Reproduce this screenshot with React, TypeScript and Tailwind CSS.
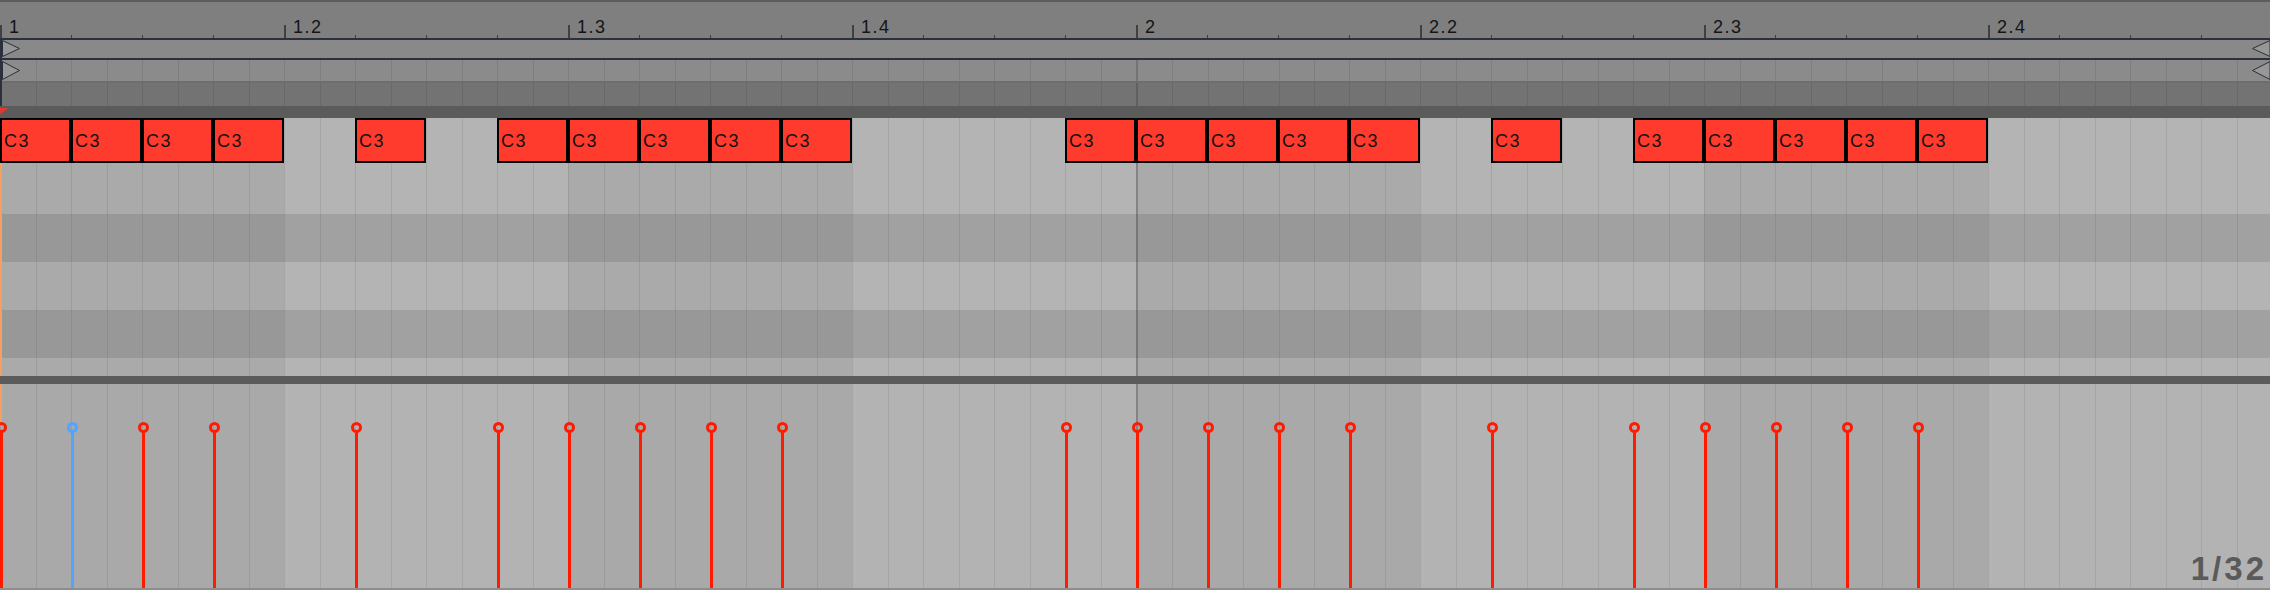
import React from 'react';

const beats = ['1', '1.2', '1.3', '1.4', '2', '2.2', '2.3', '2.4'];
const notes = [0, 1, 2, 3, 5, 7, 8, 9, 10, 11, 15, 16, 17, 18, 19, 21, 23, 24, 25, 26, 27];
const font = "font-['Liberation_Sans',Arial,sans-serif]";

interface ColumnsProps {
  even: string;
  odd: string;
  line: string;
  barLine: string;
}

// 32nd-note grid, 8 beats of 8 cells
const Columns: React.FC<ColumnsProps> = ({ even, odd, line, barLine }) => (
  <div className="flex h-full w-full">
    {beats.map((_, b) => (
      <div key={b} className={`flex flex-1 ${b % 2 === 0 ? even : odd}`}>
        {Array.from({ length: 8 }).map((_, c) => (
          <div key={c} className={`flex-1 ${b === 4 && c === 0 ? barLine : line}`} />
        ))}
      </div>
    ))}
  </div>
);

const TriRight = ({ h }: { h: number }) => (
  <svg width="19" height={h} viewBox={`0 0 19 ${h}`} className="block">
    <polygon points={`0.5,0.5 17.5,${h / 2} 0.5,${h - 0.5}`} fill="#979797" stroke="#2c2f3c" strokeWidth="1" />
  </svg>
);

const TriLeft = ({ h }: { h: number }) => (
  <svg width="19" height={h} viewBox={`0 0 19 ${h}`} className="block">
    <polygon points={`19,0.5 1.5,${h / 2} 19,${h - 0.5}`} fill="#979797" stroke="#2c2f3c" strokeWidth="1" />
  </svg>
);

const Ruler = () => (
  <div className="flex h-[36px] bg-[#7f7f7f]">
    {beats.map((label, b) => (
      <div key={b} className="flex flex-1">
        {[0, 1, 2, 3].map((s) => (
          <div key={s} className="flex flex-1 items-start">
            {s === 0 ? (
              <>
                <div className="mt-[23px] h-[13px] w-[2px] bg-[#404040]" />
                <span className={`ml-[7px] mt-[16.4px] text-[18px] leading-[18px] tracking-[1.5px] text-[#141414] ${font}`}>
                  {label}
                </span>
              </>
            ) : (
              <div className="mt-[33px] h-[3px] w-px bg-[#404040]" />
            )}
          </div>
        ))}
      </div>
    ))}
  </div>
);

export default function App() {
  return (
    <div className="h-[590px] w-[2270px] overflow-hidden bg-[#7f7f7f]">
      <div className="flex h-[590px] w-[2272px] flex-col">
        <div className="h-[2px] bg-[#5d5d5d]" />
        <Ruler />

        {/* loop brace + upper lanes */}
        <div className="relative flex flex-col">
          <div className="h-[2px] bg-[#2c2f3c]" />
          <div className="flex h-[18px] items-start justify-between bg-[#898989] pl-[2px] pr-[2px]">
            <TriRight h={17} />
            <TriLeft h={17} />
          </div>
          <div className="h-[2px] bg-[#2c2f3c]" />
          <div className="relative h-[21px]">
            <Columns even="bg-[#8b8b8b]" odd="bg-[#8b8b8b]" line="border-l border-[#7e7e7e]" barLine="border-l-2 border-[#747474]" />
            <div className="absolute inset-x-[2px] top-[1px] flex justify-between">
              <TriRight h={19} />
              <TriLeft h={19} />
            </div>
          </div>
          <div className="h-[2px] bg-[#6d6d6d]" />
          <div className="h-[23px]">
            <Columns even="bg-[#737373]" odd="bg-[#737373]" line="border-l border-[#686868]" barLine="border-l-2 border-[#606060]" />
          </div>
          <div className="absolute bottom-0 left-0 top-0 w-[2px] bg-[#2c2f3c]" />
        </div>

        <div className="h-[12px] bg-[#5b5b5b] pt-[1.5px]">
          <svg width="9" height="7" viewBox="0 0 9 7" className="block">
            <polygon points="0,0 8.5,0 0,6.5" fill="#e23a2a" />
          </svg>
        </div>

        {/* note lanes */}
        <div className="relative h-[258px]">
          <Columns even="bg-[#aaaaaa]" odd="bg-[#b4b4b4]" line="border-l border-black/[0.08]" barLine="border-l-2 border-black/[0.22]" />
          <div className="absolute inset-0 flex flex-col">
            <div className="h-[96px]" />
            <div className="h-[48px] bg-black/10" />
            <div className="h-[48px]" />
            <div className="h-[48px] bg-black/10" />
          </div>
          <div className="absolute bottom-0 left-0 top-0 w-[2px] bg-[#f4a060]" />
          <div className="absolute inset-x-0 top-0 flex h-[45px]">
            {Array.from({ length: 32 }).map((_, i) => (
              <div key={i} className="h-full flex-1">
                {notes.includes(i) && (
                  <div
                    className={`flex h-full items-center border-2 border-black bg-[#ff3b2e] pl-[2px] text-[18px] leading-[18px] tracking-[1.5px] text-[#111111] ${font}`}
                  >
                    C3
                  </div>
                )}
              </div>
            ))}
          </div>
        </div>

        <div className="h-[8px] bg-[#5b5b5b]" />

        {/* velocity lane */}
        <div className="relative h-[204px]">
          <Columns even="bg-[#a9a9a9]" odd="bg-[#b3b3b3]" line="border-l border-black/[0.08]" barLine="border-l-2 border-black/[0.22]" />
          <div className="absolute left-0 top-0 h-[40px] w-[2px] bg-[#f4a060]" />
          <div className="absolute inset-0 flex">
            {Array.from({ length: 32 }).map((_, i) => (
              <div key={i} className="h-full flex-1">
                {notes.includes(i) && (
                  <div className="-ml-[4px] mt-[38px] flex h-[166px] w-[11px] flex-col items-center">
                    <div
                      className={`h-[11px] w-[11px] shrink-0 rounded-full border-[3px] ${
                        i === 1 ? 'border-[#4fa5ff]' : 'border-[#ff1a00]'
                      }`}
                    />
                    <div className={`w-[3px] flex-1 ${i === 1 ? 'bg-[#4fa5ff]' : 'bg-[#ff1a00]'}`} />
                  </div>
                )}
              </div>
            ))}
          </div>
          <span
            className={`absolute bottom-[3px] right-[5px] text-[33px] font-bold leading-[33px] tracking-[3px] text-[#5a5a5a] ${font}`}
          >
            1/32
          </span>
        </div>

        <div className="h-[2px] bg-[#8d8d8d]" />
      </div>
    </div>
  );
}
